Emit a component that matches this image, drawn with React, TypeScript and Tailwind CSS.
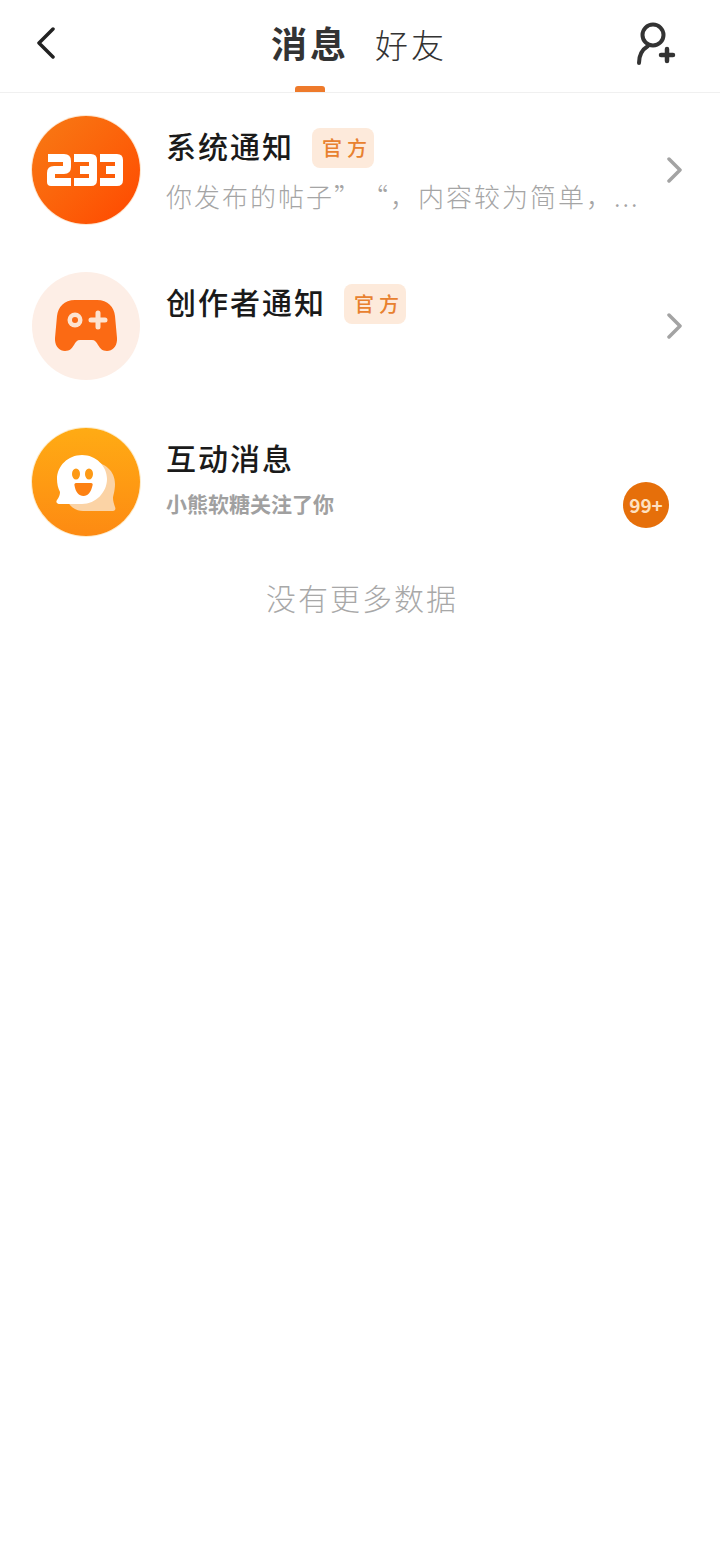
const font = { fontFamily: '"Noto Sans CJK SC", "Noto Sans", sans-serif' }

function Logo233() {
  return (
    <div className="w-[108px] h-[108px] rounded-full bg-gradient-to-br from-[#f77a14] to-[#ff4600] shadow-[0_0_0_1px_#fde7d0] flex items-center justify-center">
      <svg width="78" height="34" viewBox="0 0 78 34" fill="none" stroke="#fff" strokeWidth="8" strokeLinejoin="round">
        <path d="M1 5h16q3 0 3 3v6q0 3-3 3H7q-3 0-3 3v9h20" />
        <path d="M27 5h17q2 0 2 2v20q0 2-2 2H27M33 17h13" />
        <path d="M53 5h17q2 0 2 2v20q0 2-2 2H53M59 17h13" />
      </svg>
    </div>
  )
}

function LogoGame() {
  return (
    <div className="w-[108px] h-[108px] rounded-full bg-[#fdeee6] flex items-center justify-center">
      <svg width="62" height="52" viewBox="0 0 62 52">
        <path d="M20 0h22c11 0 17 7 18 16l2 22c0.500 8-4 13-10 13-5 0-7-3-9-6-1.500-3-3-5-6-5h-12c-3 0-4.500 2-6 5-2 3-4 6-9 6-6 0-10.500-5-10-13l2-22C3 7 9 0 20 0z" fill="#fb6a14" />
        <circle cx="20" cy="20" r="7.500" fill="#fde3d0" />
        <circle cx="20" cy="20" r="3" fill="#fb6a14" />
        <path d="M36 20h14M43 13v14" stroke="#fde3d0" strokeWidth="5" strokeLinecap="round" />
      </svg>
    </div>
  )
}

function LogoChat() {
  return (
    <div className="w-[108px] h-[108px] rounded-full bg-gradient-to-b from-[#ffab14] to-[#fd8a12] shadow-[0_0_0_1px_#fdeccb] flex items-center justify-center">
      <svg width="62" height="58" viewBox="0 0 62 58" className="mt-[1px]">
        <path d="M36 8c14 0 24 9 24 22 0 7-2 12-2 14 0 3 1 6 2 9 1 2 0 4-2 4H28c-10 0-18-8-18-22C10 18 22 8 36 8z" fill="#fbd3a5" />
        <path d="M27 1c14 0 25 11 25 24s-11 25-25 25H5c-3 0-4.500-2-3-4 2-3 3-5 3-8C3 34 2 30 2 25 2 12 13 1 27 1z" fill="#fff" />
        <ellipse cx="21" cy="20" rx="4" ry="5.500" fill="#fd9a16" />
        <ellipse cx="34" cy="20" rx="4" ry="5.500" fill="#fd9a16" />
        <path d="M21 29h15c1.500 0 2 1 1.500 2.500C36 38 33 42 28.500 42s-8-4-9-10.500C19 30 20 29 21 29z" fill="#fd8112" />
      </svg>
    </div>
  )
}

function OfficialTag() {
  return (
    <span className="w-[62px] h-[40px] shrink-0 pl-[10px] rounded-lg bg-[#fdeadb] text-[#e8812f] text-[20px] font-medium tracking-[5px] whitespace-nowrap flex items-center">
      官方
    </span>
  )
}

function RowArrow() {
  return (
    <svg width="16" height="26" viewBox="0 0 16 26" fill="none" stroke="#a3a3a3" strokeWidth="3.500" strokeLinecap="round" strokeLinejoin="round">
      <path d="M2 2l11 11-11 11" />
    </svg>
  )
}

function AddFriendIcon() {
  return (
    <svg width="40" height="44" viewBox="0 0 40 44" fill="none" stroke="#333" strokeLinecap="round">
      <circle cx="17" cy="13" r="10.500" strokeWidth="4" />
      <path d="M3 41c0-8 4-14 9-17" strokeWidth="4" />
      <path d="M25 33h12M31 27v12" strokeWidth="4.500" />
    </svg>
  )
}

export default function App() {
  return (
    <div className="min-h-[1546px] bg-white" style={font}>

      {/* Top bar */}
      <header className="relative h-[93px] border-b border-[#f0f0f0] flex items-start justify-between pl-[36px] pr-[44px]">
        <svg width="20" height="32" viewBox="0 0 20 32" fill="none" stroke="#222" strokeWidth="3.500" strokeLinecap="round" strokeLinejoin="round" className="mt-[27px]">
          <path d="M17 2L3 16l14 14" />
        </svg>

        <div className="absolute left-[271px] top-[16px] flex items-start gap-[26px]">
          <div className="relative h-[76px]">
            <span className="block text-[36px] leading-[52px] font-bold tracking-[3px] text-[#333]">消息</span>
            <div className="absolute left-[24px] bottom-0 w-[30px] h-[6px] rounded-t-[3px] bg-[#ee7a2b]" />
          </div>
          <span className="text-[33px] leading-[52px] mt-[2px] font-light tracking-[3px] text-[#333]">好友</span>
        </div>

        <div className="mt-[22px]">
          <AddFriendIcon />
        </div>
      </header>

      {/* Message list */}
      <div className="flex items-center h-[156px] pl-[32px] pr-[37px] mt-[-1px]">
        <Logo233 />
        <div className="ml-[26px] flex-1 min-w-0 flex flex-col mt-[4px]">
          <div className="flex items-center gap-[18px] h-[40px]">
            <span className="text-[30px] leading-[40px] font-medium tracking-[2px] text-[#1a1a1a] mb-[6px]">系统通知</span>
            <OfficialTag />
          </div>
          <p className="mt-[7px] text-[26px] leading-[42px] font-light tracking-[2px] text-[#a5a5a5] whitespace-nowrap [text-spacing-trim:space-all]">
            你发布的帖子”“，内容较为简单，...
          </p>
        </div>
        <RowArrow />
      </div>

      <div className="flex items-center h-[156px] pl-[32px] pr-[37px]">
        <LogoGame />
        <div className="ml-[26px] flex-1 min-w-0 flex items-center gap-[18px] h-[40px] mb-[44px]">
          <span className="text-[30px] leading-[40px] font-medium tracking-[2px] text-[#1a1a1a] mb-[6px]">创作者通知</span>
          <OfficialTag />
        </div>
        <RowArrow />
      </div>

      <div className="flex items-center h-[156px] pl-[32px] pr-[51px]">
        <LogoChat />
        <div className="ml-[26px] flex-1 min-w-0 flex flex-col mb-[4px]">
          <span className="text-[30px] leading-[40px] font-medium tracking-[2px] text-[#1a1a1a]">互动消息</span>
          <p className="mt-[6px] text-[21px] leading-[40px] font-bold text-[#a0a0a0]">小熊软糖关注了你</p>
        </div>
        <div className="w-[46px] h-[46px] mt-[46px] rounded-full bg-[#e66f0a] text-[#fde0c0] text-[19px] font-bold flex items-center justify-center">
          99+
        </div>
      </div>

      <p className="mt-[15px] pl-[4px] text-center text-[30px] leading-[44px] font-light tracking-[2px] text-[#a8a8a8]">
        没有更多数据
      </p>
    </div>
  )
}
